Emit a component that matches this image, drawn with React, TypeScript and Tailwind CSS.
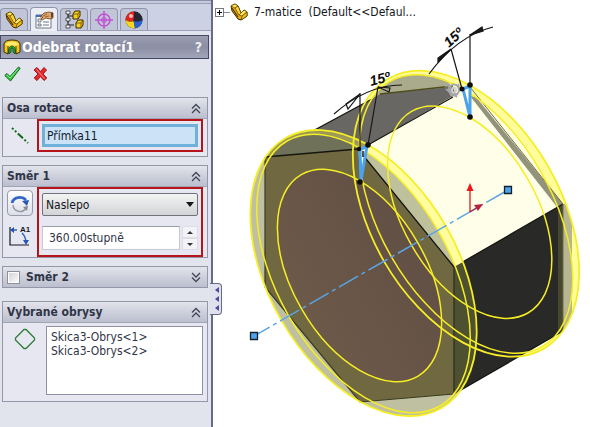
import { useState } from "react";
import type { ReactNode } from "react";

function PartIcon({ className }: { className: string }) {
  return (
    <svg viewBox="0 0 18 18" className={className} aria-hidden="true" strokeLinejoin="round">
      <path d="M1 3 5 1l3 2 3 7 3-3 3 2v4l-6 4-3-1-6-8z" fill="#e9ac12" stroke="#3d2a00" />
      <path d="m1 3 4-2 3 2-3 2z" fill="#ffe95c" stroke="#5a3d00" strokeWidth=".6" />
      <path d="m5 5 3-2 3 7-2 2z" fill="#ffd93a" stroke="#5a3d00" strokeWidth=".7" />
      <path d="m9 12 2-2 3-3 3 2-5 4z" fill="#ffe95c" stroke="#5a3d00" strokeWidth=".7" />
      <path d="m12 13 5-4v4l-6 4z" fill="#f2c01d" stroke="#5a3d00" strokeWidth=".7" />
      <path d="m2 5 6 9" stroke="#4a3000" strokeWidth="1.200" />
    </svg>
  );
}

function PropertyIcon() {
  return (
    <svg viewBox="0 0 20 20" className="size-5" aria-hidden="true">
      <path d="M2 5h15v13H2z" fill="#fff" stroke="#6b7488" />
      <path d="M2 5h6v2H2z" fill="#3b71c4" />
      <path d="M4 9h3v3H4zM4 14h3v2H4z" fill="#e5ebf6" stroke="#58647c" strokeWidth=".8" />
      <path d="M9 12h6M9 15h6" stroke="#6d7686" />
      <path d="m6 7 4-4 5-1 4 1v5l-4 1-3-1-4 2-1-1 2-2z" fill="#dda56c" stroke="#774319" strokeWidth=".8" />
      <path d="m9 6 4-2m-2 3 4-1" stroke="#8d552a" strokeWidth=".8" />
      <path d="M17 2.500h2v5h-2z" fill="#5f4630" />
    </svg>
  );
}

function ConfigIcon() {
  return (
    <svg viewBox="0 0 20 20" className="size-5" aria-hidden="true">
      <path d="M4 1v17M4 6h6M4 15h6" fill="none" stroke="#222" strokeWidth="1.200" />
      <path d="M2 1h4v3H2zM2 8h4v3H2zM2 15h4v3H2z" fill="#f4f4ff" stroke="#333" strokeWidth=".8" />
      <g fill="#f6cd20" stroke="#3d2900" strokeLinejoin="round">
        <path d="m9 4 2-3h5v5l-2 3H9z" />
        <path d="m12 13 2-3h5v5l-2 3h-5z" />
      </g>
      <path d="M9 4h5l2-3M14 4v5M12 13h5l2-3M17 13v5" fill="none" stroke="#6b4b00" strokeWidth=".8" />
    </svg>
  );
}

function TargetIcon() {
  return (
    <svg viewBox="0 0 20 20" className="size-5" aria-hidden="true" fill="none" stroke="#c052d4" strokeWidth="1.500">
      <circle cx="10" cy="10" r="6" />
      <circle cx="10" cy="10" r="2.500" strokeWidth="1" />
      <path d="M10 1v18M1 10h18" />
    </svg>
  );
}

function AppearanceIcon() {
  return (
    <svg viewBox="0 0 20 20" className="size-5" aria-hidden="true">
      <circle cx="10" cy="10" r="8.500" fill="#20242e" />
      <path d="M10 1.500A8.500 8.500 0 0 0 1.500 10q4 3 8 1 1-5 .5-9.500" fill="#e0251f" />
      <path d="M10 1.500A8.500 8.500 0 0 1 18.500 10q-5 3-9 1 1-5 .5-9.500" fill="#242733" />
      <path d="M1.500 10A8.500 8.500 0 0 0 11 18.400q-.5-4-1.500-7.400-4 2-8-1" fill="#f6d51d" />
      <path d="M11 18.400A8.500 8.500 0 0 0 18.500 10q-5 3-9 1 1 3 1.500 7.400" fill="#2a5fd0" />
      <circle cx="7" cy="6" r="2" fill="#fff" opacity=".7" />
    </svg>
  );
}

function CutRevolveIcon() {
  return (
    <svg viewBox="0 0 18 16" className="h-4 w-[18px] shrink-0" aria-hidden="true">
      <path d="M1 5q1-4 8-4t8 4v8l-4 2-1-5q-3-3-6 0l-1 5-4-2z" fill="#f3c51f" stroke="#3e2c00" />
      <path d="M2 5q7-5 14 0-3 2-4 2-3-2-6 0-2 0-4-2" fill="#ffed72" />
      <path d="M6 15V9q3-4 6 0v6l-2-2V9H8v4z" fill="#2bb043" stroke="#08591b" strokeWidth=".8" />
      <path d="M5 7v7M13 7v7" stroke="#5c4200" />
    </svg>
  );
}

function Chevrons({ open }: { open: boolean }) {
  return (
    <svg viewBox="0 0 10 11" className="h-[11px] w-2.5" fill="none" stroke="#414554" strokeWidth="1.300" aria-hidden="true">
      {open ? <path d="m1 5.500 4-4 4 4M1 10l4-4 4 4" /> : <path d="m1 1 4 4 4-4M1 5.500l4 4 4-4" />}
    </svg>
  );
}

type GroupProps = {
  title: string;
  checkbox?: boolean;
  children?: ReactNode;
};

function Group({ title, checkbox, children }: GroupProps) {
  const open = Boolean(children);
  return (
    <section className="border border-[#9497a8] bg-[#e7e7f1]">
      <div className="flex h-5 items-center bg-linear-to-b from-[#e3e4eb] via-[#ced0dc] via-50% to-[#bcbfcf] pr-1.5 pl-1">
        {checkbox ? (
          <label className="flex items-center gap-1.5 font-bold">
            <input
              type="checkbox"
              className="size-[13px] appearance-none border border-[#8c8f98] bg-linear-to-br from-[#d0d0d4] to-white ring-1 ring-white ring-inset"
            />
            {title}
          </label>
        ) : (
          <h2 className="font-bold">{title}</h2>
        )}
        <button type="button" aria-label={title} aria-expanded={open} className="ml-auto">
          <Chevrons open={open} />
        </button>
      </div>
      {children && <div className="border-t border-[#a2a4b3]">{children}</div>}
    </section>
  );
}

const tabs = [
  { name: "FeatureManager", icon: <PartIcon className="size-[18px]" /> },
  { name: "PropertyManager", icon: <PropertyIcon /> },
  { name: "ConfigurationManager", icon: <ConfigIcon /> },
  { name: "DimXpertManager", icon: <TargetIcon /> },
  { name: "DisplayManager", icon: <AppearanceIcon /> },
];

function PropertyPanel() {
  const [angle, setAngle] = useState("360.00stupně");

  const step = (by: number) => setAngle((parseFloat(angle) + by).toFixed(2) + "stupně");

  return (
    <aside className="relative flex w-[213px] shrink-0 flex-col border-r-2 border-[#686b87] bg-[#e1e3ed] text-[#303548]">
      <div className="border-t border-[#8c90aa] bg-[#c5cadd] pt-0.5">
        <div className="flex items-end gap-0.5 border-t border-b border-[#9ca1b9] bg-[#ccd1e3] pt-[3px]">
          {tabs.map((tab, i) => (
            <button
              key={tab.name}
              type="button"
              aria-label={tab.name}
              className={
                i === 1
                  ? "-mb-px flex h-6 w-7 items-center justify-center rounded-t border border-b-0 border-[#9296ac] bg-[#eceef5]"
                  : "flex h-[22px] w-7 items-center justify-center rounded-t border border-b-0 border-[#9296ac] bg-[#c0c5d8]"
              }
            >
              {tab.icon}
            </button>
          ))}
        </div>
      </div>

      <div className="mt-1 mr-0.5 flex h-6 items-center gap-px border border-[#454966] bg-linear-to-b from-[#9b9eb1] via-[#8b8ea4] to-[#a3a6b8] pr-1.5 pl-0.5">
        <CutRevolveIcon />
        <h1 className="text-[14px] font-bold text-white">Odebrat rotací1</h1>
        <button type="button" aria-label="Nápověda" className="ml-auto text-[14px] font-bold text-[#eceef3]">
          ?
        </button>
      </div>

      <div className="flex gap-3 px-1 pt-1.5 pb-3.5">
        <button type="button" aria-label="OK">
          <svg viewBox="0 0 17 18" className="h-[18px] w-[17px]">
            <path d="m.8 10.500 2.200-2 3 3L14.500 2l1.700 1.300L6.500 16z" fill="#35c845" stroke="#176b20" />
            <path d="m3 10 3 3 8-9" fill="none" stroke="#83ee82" />
          </svg>
        </button>
        <button type="button" aria-label="Storno">
          <svg viewBox="0 0 15 16" className="h-4 w-[15px]">
            <path
              d="m1 4 3-2.500 3.500 4L11 1.500 13.500 4 10 8l3.800 4-2.800 2.500-3.500-4-3.500 4L1.200 12 5 8z"
              fill="#e52b32"
              stroke="#a1111a"
            />
            <path d="m3.500 3.500 8 9" stroke="#fa8c83" />
          </svg>
        </button>
      </div>

      <div className="flex flex-col pr-[3px] pl-0.5">
        <Group title="Osa rotace">
          <div className="flex items-start pr-1 pb-1">
            <div className="flex w-[34px] justify-center pt-2">
              <svg viewBox="0 0 18 18" className="size-[18px]" aria-hidden="true">
                <path d="m1 1 16 15" stroke="#126a1c" strokeWidth="2" strokeDasharray="2 2 2 2 7 2 2 2" />
              </svg>
            </div>
            <div className="min-w-0 flex-1 border-2 border-[#b5141b] p-[3px]">
              <input
                aria-label="Osa rotace"
                defaultValue="Přímka11"
                className="block h-[23px] w-full border-[3px] border-[#70b1dc] bg-[#cce3f7] px-0.5 text-[#14202c] outline-none"
              />
            </div>
          </div>
        </Group>

        <div className="mt-2">
          <Group title="Směr 1">
            <div className="flex items-start pr-1">
              <div className="flex w-[34px] flex-col gap-2 pt-[3px] pl-1">
                <button
                  type="button"
                  aria-label="Opačný směr"
                  className="flex size-[26px] items-center justify-center rounded border border-[#989ba9] bg-linear-to-b from-white to-[#dedfe9]"
                >
                  <svg viewBox="0 0 20 20" className="size-5">
                    <path d="M2 10a8 7 0 0 1 14-3" fill="none" stroke="#3268c4" strokeWidth="2.800" />
                    <path d="m12 8 7-1-2 6z" fill="#2457b8" />
                    <path d="M3 12a7 7 0 0 0 13 3" fill="none" stroke="#9a9da8" strokeWidth="1.600" />
                    <path d="m13 14 5-1-1 5z" fill="#858893" />
                  </svg>
                </button>
                <svg viewBox="0 0 24 24" className="size-6" aria-hidden="true">
                  <path d="M3 3v18h19" fill="none" stroke="#16181f" strokeWidth="1.200" />
                  <path d="M4 6h6M15 9q4 4 4 10" fill="none" stroke="#2e62c0" strokeWidth="1.500" />
                  <path d="m3 6 4-3v6zM16 16l3 5 3-5z" fill="#2457b8" />
                  <text x="13" y="8" fontFamily="Liberation Sans" fontSize="8" fontWeight="bold" fill="#16181f">
                    A1
                  </text>
                </svg>
              </div>
              <div className="flex min-w-0 flex-1 flex-col gap-2.5 border-2 border-[#b5141b] px-[3px] pt-1 pb-[5px]">
                <div className="relative">
                  <select
                    aria-label="Typ konce"
                    className="block h-[23px] w-full appearance-none rounded-xs border border-[#70737c] bg-linear-to-b from-[#f3f3f3] to-[#d3d4d6] px-[3px] text-[#14161c]"
                  >
                    <option>Naslepo</option>
                    <option>Do roviny</option>
                  </select>
                  <svg viewBox="0 0 8 5" className="pointer-events-none absolute top-[9px] right-1 h-[5px] w-2" aria-hidden="true">
                    <path d="M0 0h8L4 5z" fill="#14161c" />
                  </svg>
                </div>
                <div className="flex gap-0.5">
                  <input
                    aria-label="Úhel"
                    value={angle}
                    onChange={(e) => setAngle(e.target.value)}
                    className="block h-6 min-w-0 flex-1 border border-[#c6c8d3] border-t-[#999ca8] bg-white px-1.5 outline-none"
                  />
                  <div className="flex w-4 flex-col">
                    <button type="button" aria-label="Zvýšit" onClick={() => step(1)} className="flex h-3 items-center justify-center border border-[#dcdde5] bg-[#f3f3f7]">
                      <svg viewBox="0 0 6 3" className="h-[3px] w-1.5">
                        <path d="m0 3 3-3 3 3z" fill="#333" />
                      </svg>
                    </button>
                    <button type="button" aria-label="Snížit" onClick={() => step(-1)} className="flex h-3 items-center justify-center border border-[#dcdde5] bg-[#f3f3f7]">
                      <svg viewBox="0 0 6 3" className="h-[3px] w-1.5">
                        <path d="m0 0 3 3 3-3z" fill="#333" />
                      </svg>
                    </button>
                  </div>
                </div>
              </div>
            </div>
          </Group>
        </div>

        <div className="mt-2">
          <Group title="Směr 2" checkbox />
        </div>

        <div className="mt-[13px]">
          <Group title="Vybrané obrysy">
            <div className="flex items-start pt-[3px] pr-1 pb-1.5">
              <div className="flex w-[43px] justify-center pt-0.5">
                <svg viewBox="0 0 22 22" className="size-[22px]" fill="none" stroke="#2f7d39" strokeWidth="1.300" aria-hidden="true">
                  <path d="M10 1.500h2L20.500 10v2L12 20.500h-2L1.500 12v-2z" />
                </svg>
              </div>
              <select
                multiple
                aria-label="Vybrané obrysy"
                className="block h-[69px] min-w-0 flex-1 overflow-hidden border border-[#8e91a6] bg-white pt-[3px] pl-0.5 leading-[14px] outline-none"
              >
                <option className="min-h-0 p-0 px-0.5">Skica3-Obrys&lt;1&gt;</option>
                <option className="min-h-0 p-0 px-0.5">Skica3-Obrys&lt;2&gt;</option>
              </select>
            </div>
          </Group>
        </div>
      </div>

      <button
        type="button"
        aria-label="Skrýt panel"
        className="absolute top-[283px] -right-[11px] flex h-8 w-3 flex-col items-end justify-around rounded-r border border-l-0 border-[#686b87] bg-[#dfe1ec] py-0.5 pr-0.5"
      >
        {[0, 1, 2].map((n) => (
          <svg key={n} viewBox="0 0 4 6" className="h-1.5 w-1">
            <path d="M4 0v6L0 3z" fill="#4d4a96" />
          </svg>
        ))}
      </button>
    </aside>
  );
}

function Ring({ cx, cy, rx, ry }: { cx: number; cy: number; rx: number; ry: number }) {
  return <ellipse rx={rx} ry={ry} transform={`translate(${cx} ${cy}) rotate(60)`} />;
}

function NutModel() {
  return (
    <svg viewBox="213 24 377 403" className="block w-full" role="img" aria-label="7-matice">
      <defs>
        <clipPath id="front">
          <Ring cx={363.5} cy={273} rx={155.8} ry={94.8} />
        </clipPath>
        <clipPath id="back">
          <Ring cx={466} cy={213.7} rx={155.8} ry={94.8} />
        </clipPath>
        <clipPath id="whiteSide">
          <path d="M358 149 366 120 500 180 480 262 454 267z" />
        </clipPath>
        <clipPath id="graySide">
          <path d="M268 157 262 148 330 110 378 100 370 144 358 149z" />
        </clipPath>
        <clipPath id="backLeft">
          <path d="M340 160V60H425L453 87 380 110z" />
        </clipPath>
        <linearGradient id="bore" x1="0" y1="0" x2="0" y2="1">
          <stop offset="0" stopColor="#625045" />
          <stop offset="1" stopColor="#6c5949" />
        </linearGradient>
        <linearGradient id="rim" gradientUnits="userSpaceOnUse" x1="0" y1="70" x2="0" y2="357">
          <stop offset="0" stopColor="#fffd9b" />
          <stop offset=".5" stopColor="#ffffb0" />
          <stop offset=".72" stopColor="#deddb0" />
          <stop offset="1" stopColor="#c3c3a0" />
        </linearGradient>
      </defs>

      {/* far end of the revolved cut */}
      <g fill="url(#rim)">
        <Ring cx={466} cy={213.7} rx={155.8} ry={94.8} />
      </g>
      <g clipPath="url(#back)">
        <g fill="#ffffdf">
          <Ring cx={466} cy={214} rx={153} ry={86} />
        </g>
        <g clipPath="url(#backLeft)" fill="#aaaa8c">
          <Ring cx={466} cy={214} rx={153} ry={88} />
        </g>
        <path d="M563 204h9v127l-9 4z" fill="#b6b692" />
      </g>

      {/* body faces */}
      <path d="M272 153 372 99 380 94 453 87 456 95 368 146 358 149 265 157z" fill="#686763" />
      <path d="M358 149 368 145 453 96 470 92 563 204 454 267z" fill="#fffee9" />
      <path d="M470 96 476 97 563 204 557 207z" fill="#93937b" />
      <path d="M454 267 563 204V331L454 394z" fill="#292928" />
      <path d="m558 207 5-3v127l-5 2z" fill="#46472c" />
      <g fill="none" stroke="#15150f" strokeWidth="1.300">
        <path d="m272 153 100-54M368 145l85-48M454 267l109-63M454 394l109-63" />
        <path d="m380 94 73-8" stroke="#4e4e1c" />
        <path d="m470 87 93 117v127" stroke="#6d6b49" strokeWidth="1" />
      </g>

      {/* near end of the cut */}
      <g clipPath="url(#front)">
        <path d="M240 120h118v29l-93 8v130l95 115 94-8 20-12v50H240z" fill="#bfc0a1" />
        <path d="m358 149 60 20 60 70-24 28z" fill="#babb99" />
        <g clipPath="url(#whiteSide)">
          <path d="M340 110h170v170H340z" fill="#fffda0" />
          <g fill="#bfc09c">
            <Ring cx={363.5} cy={273.5} rx={153} ry={86} />
          </g>
        </g>
        <g clipPath="url(#graySide)">
          <path d="M260 100h120v60H260z" fill="#9b9958" />
          <g fill="#6f7259">
            <Ring cx={363.5} cy={273.5} rx={153} ry={86} />
          </g>
        </g>
        <path d="m454 267 30-17v127l-30 17z" fill="#4d5031" />
      </g>
      <path d="M265 157 358 149 454 267V394L360 402 265 287z" fill="#706840" />
      <path d="M454 267v127" stroke="#35351f" strokeWidth="1.500" />
      <path d="m265 157 93-8 96 118" fill="none" stroke="#15150f" strokeWidth="1.300" />
      <path d="M265 157v130l95 115 94-8" fill="none" stroke="#39391f" strokeWidth="1.200" />
      <g fill="url(#bore)">
        <Ring cx={359.5} cy={275.5} rx={116.4} ry={66.9} />
      </g>

      {/* preview edges */}
      <g fill="none" stroke="#f6ee25" strokeWidth="1.500">
        <g strokeWidth="1.800">
          <Ring cx={363.5} cy={273} rx={155.8} ry={94.8} />
          <Ring cx={466} cy={213.7} rx={155.8} ry={94.8} />
        </g>
        <Ring cx={363.5} cy={273.5} rx={153} ry={86} />
        <Ring cx={359.5} cy={275.5} rx={116.4} ry={66.9} />
        <Ring cx={466} cy={214} rx={153} ry={86} />
        <Ring cx={469.7} cy={212.2} rx={116.4} ry={66.9} />
      </g>

      {/* axis of revolution */}
      <path d="M254 336 508 190" stroke="#5aa5e4" strokeWidth="1.500" strokeDasharray="22 4 4 4" strokeDashoffset="4" />
      <path d="M250.500 332.500h7v7h-7zM504.500 186.500h7v7h-7z" fill="#4ea3ea" stroke="#14202d" strokeWidth="1.300" />

      {/* origin */}
      <path d="M470 212v-24" stroke="#ee1517" strokeWidth="1.300" />
      <path d="m470 183 3.500 8h-7z" fill="#ee1517" />
      <path d="m470 212 8-5" stroke="#a8284a" strokeWidth="1.300" />
      <path d="m483 204-5 7-4-6z" fill="#b9203d" />

      {/* angle dimensions */}
      <g fill="none" stroke="#17171a" strokeWidth="1.200">
        <path d="M334 114q33-29 68-29M360 93v56M378 87l-10 58" />
        <path d="m360 94-12 15-2-5zM378 87l11 5 1-4z" />
        <path d="M429 74q28-38 64-47M470 34v52M451 49l11 40" />
        <path d="m451 49-13 9v4zM470 35l13-4-1-4z" fill="#17171a" />
      </g>
      <g fontFamily="Liberation Sans" fontStyle="italic" fontWeight="bold" fontSize="14" fill="#0d0d0d">
        <text transform="translate(371 86) rotate(-14)">15º</text>
        <text transform="translate(449 48) rotate(-42)">15º</text>
      </g>

      {/* mate glyph at the far corner */}
      <g fill="none" stroke="#a7a7a9" strokeWidth="2">
        <path d="m445 86 4-1 2 10 7-1M446 89l11 8M458 84l2 7" />
        <ellipse cx="454" cy="90" rx="5" ry="5.500" />
        <ellipse cx="454" cy="90" rx="2" ry="2.500" stroke="#d0d0d1" />
      </g>

      {/* sketch triangles */}
      <g fill="#fffee9" stroke="#4aa3ef" strokeWidth="3" strokeLinejoin="round">
        <path d="m463 89 7-3v31z" />
        <path d="m360 150 7-4-6 34z" />
      </g>
      <path d="M363 151v6" stroke="#17171a" strokeWidth="1.500" />
      <g fill="#0d0d0d">
        <circle cx="462" cy="89" r="2.500" />
        <circle cx="470" cy="85" r="2.800" />
        <circle cx="470" cy="117" r="2.800" />
        <circle cx="359" cy="149" r="2.200" />
        <circle cx="368" cy="145" r="2.800" />
        <circle cx="360" cy="182" r="2.800" />
      </g>
    </svg>
  );
}

export default function App() {
  return (
    <div className="flex min-h-screen bg-white font-['DejaVu_Sans_Condensed','DejaVu_Sans','Noto_Sans',sans-serif] text-[12px] leading-4">
      <PropertyPanel />
      <main className="min-w-0 flex-1">
        <div className="flex h-6 items-center pl-0.5 text-[#14161c]">
          <button type="button" aria-label="Rozbalit" className="flex size-[9px] items-center justify-center border border-[#77797f] bg-white">
            <svg viewBox="0 0 5 5" className="size-[5px]">
              <path d="M0 2.500h5M2.500 0v5" stroke="#000" />
            </svg>
          </button>
          <span className="w-1.5 border-t border-[#8a8c92]" />
          <PartIcon className="size-[18px]" />
          <span className="ml-1.5 whitespace-pre">7-matice  (Default&lt;&lt;Defaul...</span>
        </div>
        <NutModel />
      </main>
    </div>
  );
}
